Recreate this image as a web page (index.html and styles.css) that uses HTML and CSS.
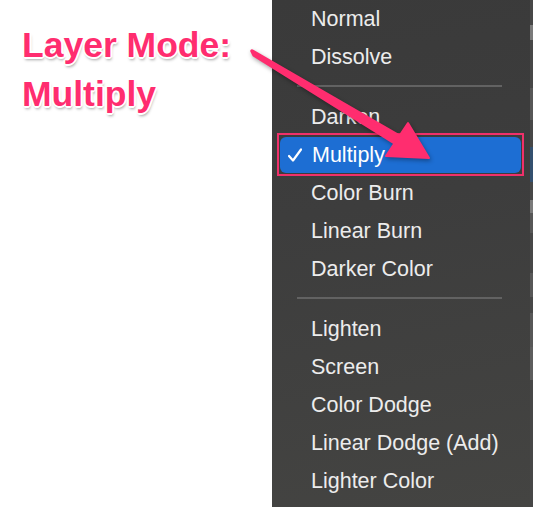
FILE: index.html
```html
<!DOCTYPE html>
<html lang="en">
<head>
    <meta charset="UTF-8">
    <title>Layer Mode: Multiply</title>
    <link rel="stylesheet" href="styles.css">
</head>
<body>
    <div class="page">
        <div class="note">
            <p class="callout">Layer Mode:<br>Multiply</p>
        </div>

        <ul class="menu">
            <li class="item">Normal</li>
            <li class="item">Dissolve</li>
            <li class="sep"></li>
            <li class="item">Darken</li>
            <li class="item active">
                <svg class="check" width="14" height="14" viewBox="0 0 14 14">
                    <path d="M1 8 L5 12.5 L13 1.5" fill="none" stroke="#fff" stroke-width="2.2" stroke-linecap="round" stroke-linejoin="round"/>
                </svg>
                Multiply
            </li>
            <li class="item">Color Burn</li>
            <li class="item">Linear Burn</li>
            <li class="item">Darker Color</li>
            <li class="sep"></li>
            <li class="item">Lighten</li>
            <li class="item">Screen</li>
            <li class="item">Color Dodge</li>
            <li class="item">Linear Dodge (Add)</li>
            <li class="item">Lighter Color</li>
        </ul>

        <div class="edge">
            <span class="seg" style="height:25px"></span>
            <span class="seg light" style="height:15px"></span>
            <span class="seg" style="height:48px"></span>
            <span class="seg mid" style="height:32px"></span>
            <span class="seg" style="height:27px"></span>
            <span class="seg blue" style="height:35px"></span>
            <span class="seg" style="height:18px"></span>
            <span class="seg light" style="height:13px"></span>
            <span class="seg mid" style="height:20px"></span>
            <span class="seg" style="height:40px"></span>
            <span class="seg mid" style="height:24px"></span>
            <span class="seg" style="height:16px"></span>
            <span class="seg mid" style="height:34px"></span>
            <span class="seg mid2" style="height:33px"></span>
        </div>

        <!-- annotation arrow, drawn over the menu -->
        <svg class="arrow" width="533" height="507" viewBox="0 0 533 507">
            <path d="M252 51 L254 55 L395 143 L399 136 Z" fill="#ff2d6f" stroke="#ff2d6f" stroke-width="3.5" stroke-linejoin="round"/>
            <path d="M408 123 L429 158 L386 156 Z" fill="#ff2d6f" stroke="#ff2d6f" stroke-width="2" stroke-linejoin="round"/>
        </svg>
    </div>
</body>
</html>
```

FILE: styles.css
```css
body {
    margin: 0;
    padding: 0;
    background-color: #fff;
    font-family: 'Liberation Sans', Arial, sans-serif;
}

.page {
    position: relative;
    display: flex;
    width: 533px;
    height: 507px;
    overflow: hidden;
}

.note {
    width: 272px;
    flex-shrink: 0;
    padding: 21px 0 0 22px;
    box-sizing: border-box;
}

.callout {
    margin: 0;
    font-size: 35.5px;
    line-height: 49px;
    font-weight: bold;
    color: #ff2d6f;
    text-shadow:
        1px 0 0 #fff, -1px 0 0 #fff, 0 1px 0 #fff, 0 -1px 0 #fff,
        2px 0 0 #fff, -2px 0 0 #fff, 0 2px 0 #fff, 0 -2px 0 #fff,
        1px 1px 0 #fff, -1px -1px 0 #fff, 1px -1px 0 #fff, -1px 1px 0 #fff,
        1px 3px 3px rgba(0, 0, 0, 0.35);
}

.menu {
    list-style: none;
    margin: 0;
    padding: 0;
    width: 258px;
    flex-shrink: 0;
    background: linear-gradient(170deg, #3a3a3a 0%, #3d3d3d 40%, #444442 100%);
    display: flex;
    flex-direction: column;
}

.item {
    height: 38px;
    display: flex;
    align-items: center;
    padding-left: 39px;
    font-size: 21.5px;
    color: #ececec;
}

.item.active {
    position: relative;
    height: 36px;
    margin: 1px 9px 1px 8px;
    padding-left: 8px;
    border-radius: 6px;
    background-color: #1d6ed3;
    color: #fff;
}

    .item.active::after {
        content: "";
        position: absolute;
        top: -4px;
        bottom: -3px;
        left: -3px;
        right: -3px;
        border: 2px solid #f0306a;
    }

.check {
    margin-right: 10px;
}

.sep {
    height: 2px;
    margin: 9px 28px 11px 25px;
    background-color: #626262;
}

.edge {
    width: 3px;
    flex-shrink: 0;
    display: flex;
    flex-direction: column;
    background-color: #474747;
}

.seg {
    display: block;
    background-color: #474747;
}

    .seg.light {
        background-color: #7a7a7a;
    }

    .seg.mid {
        background-color: #575757;
    }

    .seg.mid2 {
        background-color: #5d5d5d;
    }

    .seg.blue {
        background-color: #34506f;
    }

.arrow {
    position: absolute;
    left: 0;
    top: 0;
    pointer-events: none;
    filter: drop-shadow(1px 2px 2px rgba(0, 0, 0, 0.35));
}
```
